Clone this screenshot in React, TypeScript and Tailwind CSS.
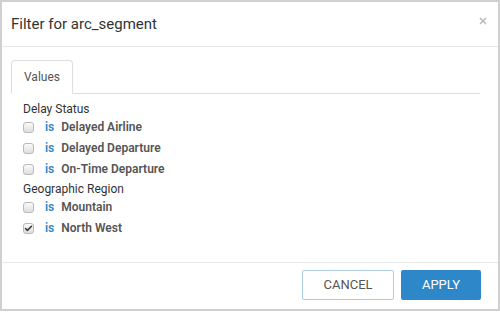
import { Check, X } from "lucide-react";

type Row = { label: string; checked?: boolean };

const groups: { name: string; rows: Row[] }[] = [
  {
    name: "Delay Status",
    rows: [{ label: "Delayed Airline" }, { label: "Delayed Departure" }, { label: "On-Time Departure" }],
  },
  {
    name: "Geographic Region",
    rows: [{ label: "Mountain" }, { label: "North West", checked: true }],
  },
];

function Box({ checked }: { checked?: boolean }) {
  return (
    <div className="w-[11px] h-[11px] rounded-[3px] border border-[#b9b9b9] bg-gradient-to-b from-[#fbfbfb] to-[#dedede] flex items-center justify-center">
      {checked && <Check size={9} strokeWidth={4} color="#333" />}
    </div>
  );
}

export default function App() {
  return (
    <div className="w-[500px] h-[312px] bg-white font-['Roboto',sans-serif]">
      <div className="w-[500px] h-[311px] border-2 border-[#d0d0d0] flex flex-col">
        <div className="h-[45px] border-b border-[#e6e6e6] flex items-center justify-between pl-[9px] pr-[10px] shrink-0">
          <div className="text-[15px] text-[#333]">Filter for arc_segment</div>
          <X size={10} strokeWidth={4} color="#bcbcbc" className="-mt-[6px]" />
        </div>
        <div className="flex-1 px-[9px] pt-[13px]">
          <div className="flex mr-[9px] border-b border-[#dddddd]">
            <div className="w-[62px] h-[34px] -mb-px border border-[#dddddd] border-b-white rounded-t-[4px] bg-white flex items-center justify-center text-[12px] text-[#555]">
              Values
            </div>
          </div>
          <div className="pl-[12px] pt-[7px]">
            {groups.map((g) => (
              <div key={g.name}>
                <div className="text-[12px] text-[#333] h-[17px] leading-[17px]">{g.name}</div>
                {g.rows.map((r) => (
                  <div key={r.label} className="flex items-center h-[21px] pb-[3px]">
                    <Box checked={r.checked} />
                    <span className="ml-[11px] text-[12px] font-semibold text-[#2d87c8]">is</span>
                    <span className="ml-[7px] text-[12px] font-semibold text-[#555]">{r.label}</span>
                  </div>
                ))}
              </div>
            ))}
          </div>
        </div>
        <div className="h-[47px] border-t border-[#e8e8e8] flex items-center justify-end gap-[7px] pr-[17px] pb-[2px] shrink-0">
          <button className="w-[92px] h-[30px] rounded-[2px] border border-[#a9cde9] bg-white text-[13px] text-[#555]">
            CANCEL
          </button>
          <button className="w-[80px] h-[30px] rounded-[2px] bg-[#2e87c8] text-[13px] text-white">
            APPLY
          </button>
        </div>
      </div>
    </div>
  );
}
